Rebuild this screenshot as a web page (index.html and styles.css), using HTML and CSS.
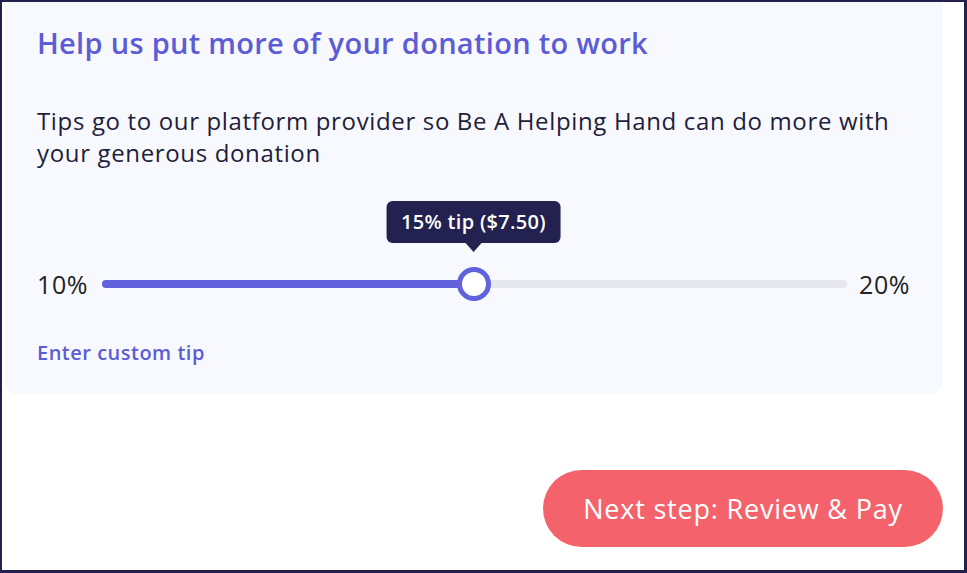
FILE: index.html
```html
<!DOCTYPE html>
<html>
<head>
<meta charset="utf-8">
<link rel="stylesheet" href="styles.css">
</head>
<body>
<div class="frame">
  <section class="card">
    <h2 class="title">Help us put more of your donation to work</h2>
    <p class="desc">Tips go to our platform provider so Be A Helping Hand can do more with your generous donation</p>
    <div class="slider-row">
      <span class="label">10%</span>
      <div class="track">
        <div class="fill" style="width: 50%"></div>
        <div class="thumb" style="left: 50%">
          <div class="tooltip">15% tip ($7.50)</div>
        </div>
      </div>
      <span class="label">20%</span>
    </div>
    <a class="custom" href="#">Enter custom tip</a>
  </section>
  <div class="actions">
    <button class="next">Next step: Review &amp; Pay</button>
  </div>
</div>
</body>
</html>
```
FILE: styles.css
```css
* { box-sizing: border-box; }
html, body { margin: 0; padding: 0; }
body {
  font-family: "Open Sans", "Noto Sans", sans-serif;
  background: #fff;
}
.frame {
  width: 967px;
  height: 573px;
  border: 2px solid #22204c;
  border-right-width: 3px;
  border-bottom-width: 3px;
  padding: 0 21px 0 3px;
  display: flex;
  flex-direction: column;
  background: #fff;
}
.card {
  background: #f8f9fe;
  border-radius: 0 0 12px 12px;
  padding: 25px 30px 30px 32px;
  height: 392px;
}
.title {
  margin: 0;
  font-size: 29px;
  line-height: 32px;
  font-weight: 600;
  color: #5c5cd7;
  letter-spacing: 0.3px;
}
.desc {
  margin: 46px 0 0;
  font-size: 24px;
  line-height: 32px;
  color: #1f1e3b;
  width: 862px;
  letter-spacing: 0.65px;
}
.slider-row {
  margin-top: 100px;
  display: flex;
  align-items: center;
  gap: 14px;
}
.label {
  font-size: 25px;
  color: #222;
  line-height: 30px;
  width: 51px;
  letter-spacing: 0.6px;
}
.label:last-child { width: 54px; margin-left: -2px; }
.track {
  flex: 1;
  position: relative;
  height: 8px;
  border-radius: 4px;
  background: #e6e7ef;
}
.fill {
  height: 100%;
  border-radius: 4px;
  background: #6262dd;
}
.thumb {
  position: absolute;
  top: 50%;
  width: 34px;
  height: 34px;
  margin: -17px 0 0 -18px;
  border-radius: 50%;
  border: 5px solid #6262dd;
  background: #fff;
}
.tooltip {
  position: absolute;
  bottom: 53px;
  left: 50%;
  transform: translateX(-50%);
  background: #23214f;
  color: #fff;
  white-space: nowrap;
  font-size: 20px;
  font-weight: 600;
  line-height: 42px;
  padding: 0 15px;
  border-radius: 6px;
  letter-spacing: 0.3px;
}
.tooltip::after {
  content: "";
  position: absolute;
  left: 50%;
  top: 100%;
  margin-left: -8px;
  border: 9px solid transparent;
  border-left-width: 8px;
  border-right-width: 8px;
  border-top-color: #23214f;
  border-bottom: 0;
}
.custom {
  display: inline-block;
  margin-top: 40px;
  font-size: 20px;
  font-weight: 600;
  color: #5c5cd7;
  text-decoration: none;
  letter-spacing: 0.5px;
}
.actions {
  display: flex;
  justify-content: flex-end;
  padding-top: 76px;
}
.next {
  width: 400px;
  height: 77px;
  border: 0;
  border-radius: 39px;
  background: #f4636c;
  color: #fff;
  font-family: inherit;
  font-size: 27px;
  letter-spacing: 0.8px;
}
```
